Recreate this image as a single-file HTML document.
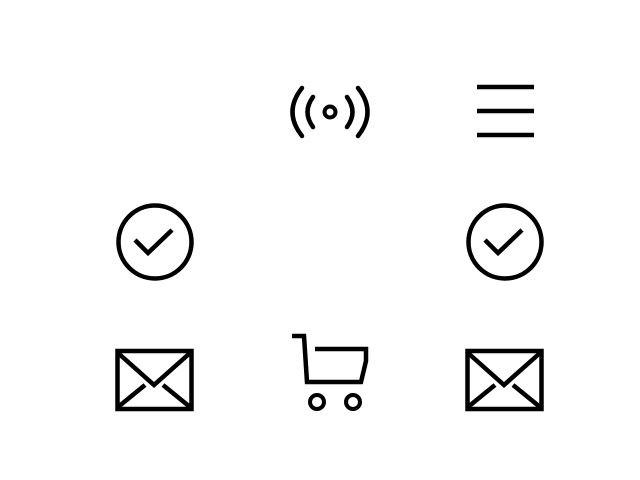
<!DOCTYPE html>
<html><head><style>html,body{margin:0;padding:0;background:#fff;width:640px;height:480px;overflow:hidden}</style></head>
<body>
<svg width="640" height="480" viewBox="0 0 640 480" fill="none" stroke="#000" stroke-width="4.5">
<circle cx="330" cy="112" r="5.5" stroke-width="4"/>
<path d="M313 97 Q302 112 313 127" stroke-linecap="round"/>
<path d="M347 97 Q358 112 347 127" stroke-linecap="round"/>
<path d="M302 88 Q283 112 302 136" stroke-linecap="round"/>
<path d="M358 88 Q377 112 358 136" stroke-linecap="round"/>
<path d="M477 87H534M477 111H534M477 135H534"/>
<circle cx="155" cy="242" r="36.5"/>
<path d="M135 240L148 253L172 230"/>
<circle cx="505" cy="242" r="36.5"/>
<path d="M485 240L498 253L522 230"/>
<rect x="117.5" y="351" width="74" height="58"/>
<path d="M118 353L154 385L190 353M118 407L145 385M190 407L163 385"/>
<rect x="467.5" y="351" width="74" height="58"/>
<path d="M468 353L504 385L540 353M468 407L495 385M540 407L513 385"/>
<path d="M292 336H304L307 382H361L366 361V349H315"/>
<circle cx="317" cy="402" r="7" stroke-width="4"/>
<circle cx="353" cy="402" r="7" stroke-width="4"/>
</svg>
</body></html>
